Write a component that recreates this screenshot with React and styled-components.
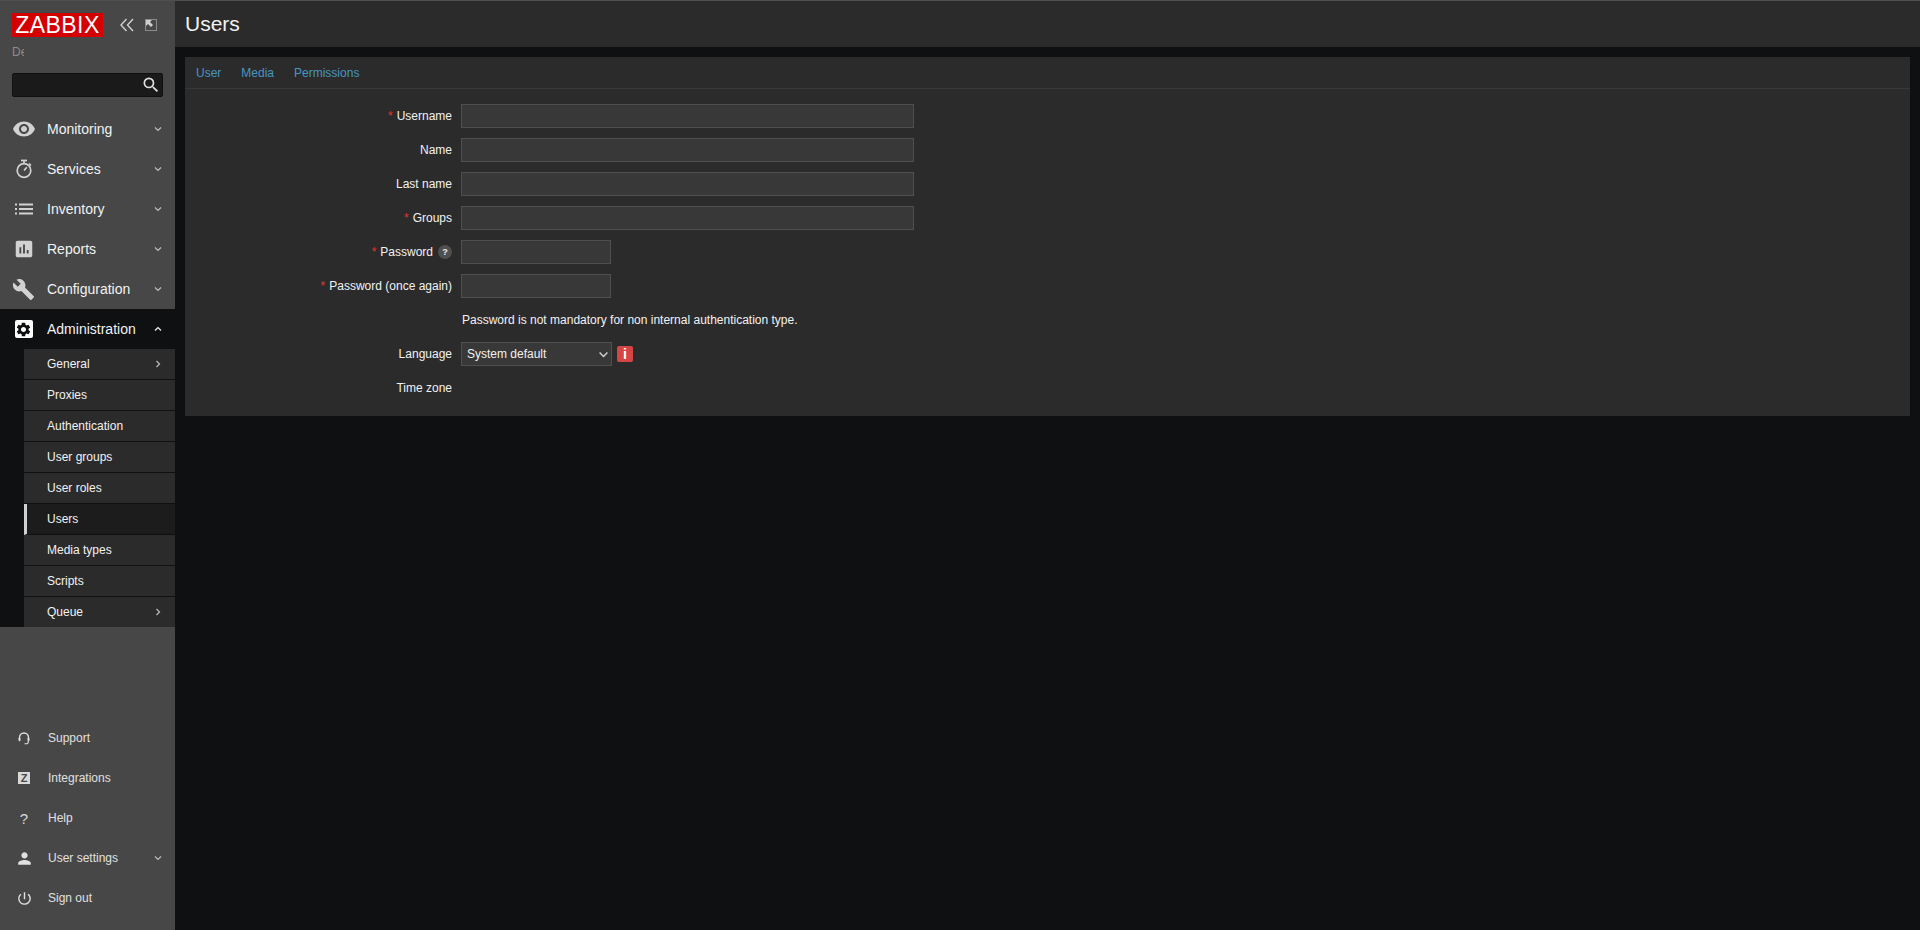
import React from "react";
import styled, { createGlobalStyle } from "styled-components";
import {
    MdVisibility,
    MdAssessment,
    MdBuild,
    MdSettings,
    MdSearch,
    MdPerson,
    MdPowerSettingsNew,
} from "react-icons/md";

function StopwatchIcon() {
    return (
        <svg width="18" height="20" viewBox="0 0 18 20" fill="none" stroke="currentColor">
            <circle cx="9" cy="11.5" r="6.8" strokeWidth="1.7" />
            <line x1="6" y1="1.5" x2="12" y2="1.5" strokeWidth="1.8" />
            <line x1="9" y1="2" x2="9" y2="4.5" strokeWidth="1.6" />
            <line x1="14" y1="4.5" x2="16" y2="6.5" strokeWidth="1.6" />
            <line x1="9" y1="11.5" x2="11.8" y2="8.2" strokeWidth="1.7" />
        </svg>
    );
}

function ListIcon() {
    return (
        <svg width="18" height="12" viewBox="0 0 18 12" fill="currentColor">
            <rect x="0" y="0.5" width="2" height="2" />
            <rect x="0" y="5" width="2" height="2" />
            <rect x="0" y="9.5" width="2" height="2" />
            <rect x="4" y="0.5" width="14" height="2" />
            <rect x="4" y="5" width="14" height="2" />
            <rect x="4" y="9.5" width="14" height="2" />
        </svg>
    );
}

function HeadsetIcon() {
    return (
        <svg width="12" height="13" viewBox="0 0 12 13" fill="none" stroke="currentColor">
            <path d="M1.5 8V5.5a4.5 4.5 0 0 1 9 0V8" strokeWidth="1.4" />
            <rect x="0.6" y="5.8" width="1.8" height="3.4" rx="0.7" fill="currentColor" strokeWidth="0" />
            <rect x="9.6" y="5.8" width="1.8" height="3.4" rx="0.7" fill="currentColor" strokeWidth="0" />
            <path d="M10.2 9v1.2a1.6 1.6 0 0 1-1.6 1.6H6.5" strokeWidth="1.1" />
        </svg>
    );
}

const mainMenu = [
    { label: "Monitoring", icon: <MdVisibility size={24} /> },
    { label: "Services", icon: <StopwatchIcon /> },
    { label: "Inventory", icon: <ListIcon /> },
    { label: "Reports", icon: <MdAssessment size={22} /> },
    { label: "Configuration", icon: <MdBuild size={23} /> },
];

const subMenu = [
    { label: "General", arrow: true },
    { label: "Proxies" },
    { label: "Authentication" },
    { label: "User groups" },
    { label: "User roles" },
    { label: "Users", active: true },
    { label: "Media types" },
    { label: "Scripts" },
    { label: "Queue", arrow: true },
];

const fields = [
    { label: "Username", required: true, wide: true },
    { label: "Name", wide: true },
    { label: "Last name", wide: true },
    { label: "Groups", required: true, wide: true },
    { label: "Password", required: true, help: true },
    { label: "Password (once again)", required: true },
];

function Chevron({ dir = "down", color = "#bdbdbd", size = 10 }) {
    const points = {
        down: "2,3.5 5,6.5 8,3.5",
        up: "2,6.5 5,3.5 8,6.5",
        right: "3.5,2 6.5,5 3.5,8",
    }[dir];
    return (
        <svg width={size} height={size} viewBox="0 0 10 10">
            <polyline points={points} fill="none" stroke={color} strokeWidth="1.2" />
        </svg>
    );
}

export default function App() {
    return (
        <>
            <GlobalStyle />
            <Page>
                <Sidebar>
                    <LogoRow>
                        <Logo>ZABBIX</Logo>
                        <SidebarTools>
                            <svg width="14" height="14" viewBox="0 0 14 14">
                                <polyline points="6.5,1 1,7 6.5,13" fill="none" stroke="#d0d0d0" strokeWidth="1.4" />
                                <polyline points="13,1 7.5,7 13,13" fill="none" stroke="#d0d0d0" strokeWidth="1.4" />
                            </svg>
                            <svg width="12" height="12" viewBox="0 0 12 12">
                                <rect x="0.5" y="0.5" width="11" height="11" fill="none" stroke="#d0d0d0" strokeDasharray="1 1" />
                                <polygon points="1,1 7,1 5,3 8,6 6,8 3,5 1,7" fill="#d0d0d0" />
                            </svg>
                        </SidebarTools>
                    </LogoRow>
                    <ServerName>Default</ServerName>
                    <SearchBox>
                        <MdSearch size={20} color="#e0e0e0" />
                    </SearchBox>
                    <Menu>
                        {mainMenu.map((item) => (
                            <MenuItem key={item.label}>
                                <MenuIcon>{item.icon}</MenuIcon>
                                <MenuLabel>{item.label}</MenuLabel>
                                <Chevron />
                            </MenuItem>
                        ))}
                        <MenuItem $open>
                            <MenuIcon>
                                <AdminBadge>
                                    <MdSettings size={17} color="#0e1012" />
                                </AdminBadge>
                            </MenuIcon>
                            <MenuLabel>Administration</MenuLabel>
                            <Chevron dir="up" color="#f2f2f2" />
                        </MenuItem>
                        <SubMenu>
                            {subMenu.map((item) => (
                                <SubItem key={item.label} $active={item.active}>
                                    <span>{item.label}</span>
                                    {item.arrow && <Chevron dir="right" />}
                                </SubItem>
                            ))}
                        </SubMenu>
                    </Menu>
                    <UserMenu>
                        <UserItem>
                            <UserIcon><HeadsetIcon /></UserIcon>
                            <span>Support</span>
                        </UserItem>
                        <UserItem>
                            <UserIcon><ZBadge>Z</ZBadge></UserIcon>
                            <span>Integrations</span>
                        </UserItem>
                        <UserItem>
                            <UserIcon><HelpMark>?</HelpMark></UserIcon>
                            <span>Help</span>
                        </UserItem>
                        <UserItem>
                            <UserIcon><MdPerson size={19} /></UserIcon>
                            <UserLabel>User settings</UserLabel>
                            <Chevron />
                        </UserItem>
                        <UserItem>
                            <UserIcon><MdPowerSettingsNew size={17} /></UserIcon>
                            <span>Sign out</span>
                        </UserItem>
                    </UserMenu>
                </Sidebar>
                <Main>
                    <Header>
                        <Title>Users</Title>
                    </Header>
                    <Content>
                        <Panel>
                            <Tabs>
                                <Tab>User</Tab>
                                <Tab>Media</Tab>
                                <Tab>Permissions</Tab>
                            </Tabs>
                            <Form>
                                {fields.map((field) => (
                                    <React.Fragment key={field.label}>
                                        <Label>
                                            {field.required && <Asterisk>*</Asterisk>}
                                            {field.label}
                                            {field.help && <HelpIcon>?</HelpIcon>}
                                        </Label>
                                        <FieldCell>
                                            <TextInput $wide={field.wide} />
                                        </FieldCell>
                                    </React.Fragment>
                                ))}
                                <Label />
                                <FieldCell>
                                    <Note>Password is not mandatory for non internal authentication type.</Note>
                                </FieldCell>
                                <Label>Language</Label>
                                <FieldCell>
                                    <SelectBox>
                                        <span>System default</span>
                                        <Chevron color="#d0d0d0" size={13} />
                                    </SelectBox>
                                    <InfoIcon>i</InfoIcon>
                                </FieldCell>
                                <Label>Time zone</Label>
                                <FieldCell />
                            </Form>
                        </Panel>
                    </Content>
                </Main>
            </Page>
        </>
    );
}

const GlobalStyle = createGlobalStyle`
    html, body {
        margin: 0;
        padding: 0;
        height: 100%;
        background: #0e1012;
    }
    * {
        box-sizing: border-box;
    }
    body {
        font-family: "Liberation Sans", Arial, sans-serif;
        font-size: 12px;
        color: #f2f2f2;
    }
`;
const Page = styled.div`
    display: flex;
    height: 100vh;
    overflow: hidden;
    border-top: 1px solid #4f4f4f;
`;
const Sidebar = styled.aside`
    width: 175px;
    flex-shrink: 0;
    display: flex;
    flex-direction: column;
    background: #474747;
`;
const LogoRow = styled.div`
    display: flex;
    align-items: center;
    justify-content: space-between;
    padding: 12px 18px 0 12px;
`;
const Logo = styled.div`
    width: 91px;
    height: 24px;
    background: #d40000;
    color: #fff;
    font-size: 23px;
    line-height: 24px;
    letter-spacing: 0.45px;
    text-align: center;
`;
const SidebarTools = styled.div`
    display: flex;
    align-items: center;
    gap: 11px;
`;
const ServerName = styled.div`
    width: 12px;
    margin: 8px 0 0 12px;
    height: 14px;
    line-height: 14px;
    overflow: hidden;
    white-space: nowrap;
    color: #8c8c8c;
`;
const SearchBox = styled.div`
    margin: 14px 12px 0;
    height: 24px;
    display: flex;
    align-items: center;
    justify-content: flex-end;
    padding-right: 1px;
    background: #1a1a1a;
    border: 1px solid #0e1012;
    border-radius: 2px;
`;
const Menu = styled.nav`
    margin-top: 12px;
    display: flex;
    flex-direction: column;
`;
const MenuItem = styled.div`
    height: 40px;
    display: flex;
    align-items: center;
    padding-right: 12px;
    font-size: 14px;
    color: #f2f2f2;
    background: ${(p) => (p.$open ? "#0e1012" : "transparent")};
`;
const MenuIcon = styled.span`
    width: 47px;
    display: flex;
    align-items: center;
    justify-content: center;
    color: #d2d2d2;
`;
const MenuLabel = styled.span`
    flex: 1;
`;
const AdminBadge = styled.span`
    width: 18px;
    height: 18px;
    display: flex;
    align-items: center;
    justify-content: center;
    background: #fff;
    border-radius: 2px;
`;
const SubMenu = styled.div`
    display: flex;
    flex-direction: column;
    padding-left: 24px;
    background: #0e1012;
`;
const SubItem = styled.div`
    height: 31px;
    display: flex;
    align-items: center;
    justify-content: space-between;
    padding: 0 12px 0 ${(p) => (p.$active ? "20px" : "23px")};
    background: ${(p) => (p.$active ? "#1c1c1c" : "#2b2b2b")};
    border-bottom: 1px solid #0e1012;
    border-left: ${(p) => (p.$active ? "3px solid #d0d0d0" : "none")};
    &:last-child {
        border-bottom: none;
        height: 30px;
    }
`;
const UserMenu = styled.div`
    margin-top: auto;
    margin-bottom: 12px;
    display: flex;
    flex-direction: column;
    color: #e0e0e0;
`;
const UserItem = styled.div`
    height: 40px;
    display: flex;
    align-items: center;
    padding-right: 12px;
`;
const UserIcon = styled.span`
    width: 48px;
    display: flex;
    align-items: center;
    justify-content: center;
    color: #e0e0e0;
`;
const UserLabel = styled.span`
    flex: 1;
`;
const ZBadge = styled.span`
    width: 12px;
    height: 12px;
    background: #d8d8d8;
    color: #474747;
    font-size: 11px;
    font-weight: bold;
    line-height: 12px;
    text-align: center;
`;
const HelpMark = styled.span`
    font-size: 15px;
    color: #d8d8d8;
`;
const Main = styled.main`
    flex: 1;
    min-width: 0;
    display: flex;
    flex-direction: column;
`;
const Header = styled.header`
    height: 46px;
    display: flex;
    align-items: center;
    padding: 0 10px;
    background: #2b2b2b;
`;
const Title = styled.h1`
    margin: 0;
    font-size: 21px;
    font-weight: normal;
    color: #f2f2f2;
`;
const Content = styled.div`
    flex: 1;
    padding: 10px;
    background: #0e1012;
`;
const Panel = styled.section`
    height: 359px;
    background: #2b2b2b;
`;
const Tabs = styled.div`
    height: 32px;
    display: flex;
    align-items: center;
    gap: 20px;
    padding: 0 11px;
    border-bottom: 1px solid #383838;
`;
const Tab = styled.a`
    color: #4796c4;
    cursor: pointer;
`;
const Form = styled.div`
    display: grid;
    grid-template-columns: 267px 1fr;
    grid-auto-rows: 24px;
    row-gap: 10px;
    padding-top: 15px;
`;
const Label = styled.label`
    display: flex;
    align-items: center;
    justify-content: flex-end;
    color: #f2f2f2;
`;
const Asterisk = styled.span`
    color: #e33734;
    margin-right: 4px;
`;
const HelpIcon = styled.span`
    width: 14px;
    height: 14px;
    margin-left: 5px;
    border-radius: 50%;
    background: #4f4f4f;
    color: #f2f2f2;
    font-size: 9px;
    font-weight: bold;
    line-height: 14px;
    text-align: center;
`;
const FieldCell = styled.div`
    display: flex;
    align-items: center;
    padding-left: 9px;
`;
const TextInput = styled.input`
    width: ${(p) => (p.$wide ? "453px" : "150px")};
    height: 24px;
    background: #383838;
    border: 1px solid #4f4f4f;
    outline: none;
    color: #f2f2f2;
`;
const Note = styled.span`
    padding-left: 1px;
`;
const SelectBox = styled.div`
    width: 151px;
    height: 24px;
    display: flex;
    align-items: center;
    justify-content: space-between;
    padding: 0 1px 0 5px;
    background: #383838;
    border: 1px solid #4f4f4f;
`;
const InfoIcon = styled.span`
    width: 16px;
    height: 16px;
    margin-left: 5px;
    background: #d64545;
    border-radius: 2px;
    color: #fff;
    font-size: 14px;
    font-weight: bold;
    line-height: 16px;
    text-align: center;
`;
